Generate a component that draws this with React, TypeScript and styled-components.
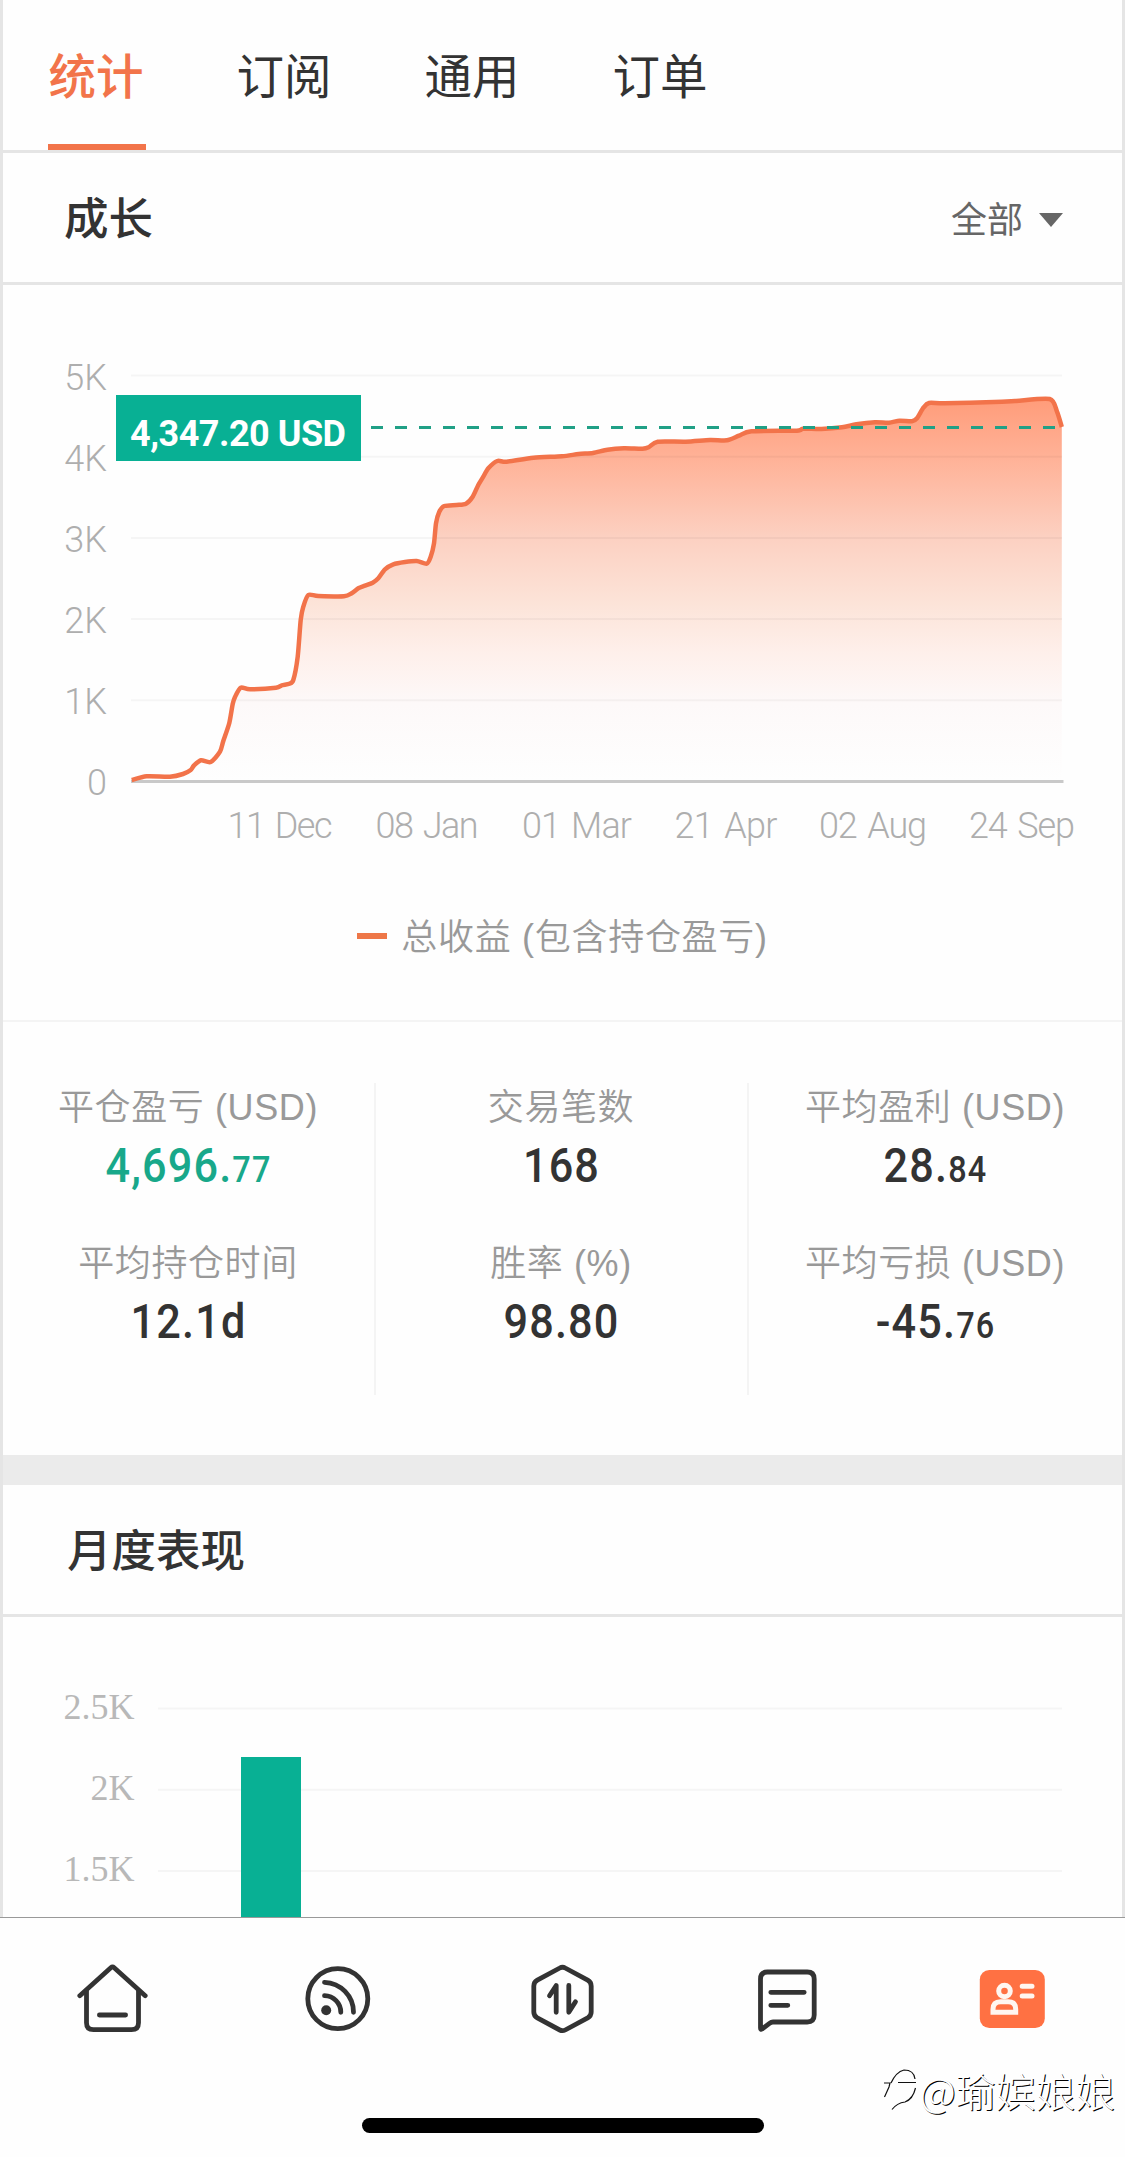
import { useState } from "react";
import styled, { createGlobalStyle } from "styled-components";

const GlobalStyle = createGlobalStyle`
  * {
    box-sizing: border-box;
  }

  body {
    margin: 0;
    background: #fff;
    color: #333;
    font-family: "Liberation Sans", "Noto Sans CJK SC", sans-serif;
  }
`;

const Page = styled.div`
  position: relative;
  display: flex;
  flex-direction: column;
  width: 1125px;
  height: 2157px;
  overflow: hidden;
  background: #fefefe;
`;

const Content = styled.main`
  flex: none;
  height: 1917px;
  overflow: hidden;
  border: solid #e5e5e5;
  border-width: 0 3px;
`;

const Tabs = styled.nav`
  display: flex;
  gap: 90px;
  height: 153px;
  padding-left: 45px;
  border-bottom: 3px solid #e5e5e5;
`;

const Tab = styled.div<{ $active: boolean }>`
  width: 98px;
  height: 150px;
  padding: 42px 2px 0 0;
  border-bottom: 6px solid ${(p) => (p.$active ? "#f2744a" : "transparent")};
  color: ${(p) => (p.$active ? "#f2744a" : "#333")};
  font-size: 47.5px;
  font-weight: ${(p) => (p.$active ? 500 : 400)};
  line-height: 72px;
  text-align: center;
  white-space: nowrap;
  cursor: pointer;
`;

const SectionHeader = styled.header<{ $indent: number }>`
  display: flex;
  align-items: center;
  justify-content: space-between;
  height: 132px;
  padding: 5px 59px 0 ${(p) => p.$indent}px;
  border-bottom: 3px solid #e5e5e5;
`;

const Title = styled.h2`
  margin: 0;
  font-size: 44.5px;
  font-weight: 500;
  line-height: 66px;
`;

const Filter = styled.div`
  display: flex;
  align-items: center;
  gap: 16px;
  padding-top: 2px;
  color: #666;
  font-size: 36px;
  line-height: 54px;
`;

const Caret = styled.span`
  margin-bottom: 2px;
  border: solid transparent;
  border-width: 14px 12px 0;
  border-top-color: #666;
`;

const Chart = styled.svg`
  display: block;
`;

const Legend = styled.div`
  display: flex;
  align-items: center;
  justify-content: center;
  gap: 14px;
  height: 54px;
  margin: 42px 0 59px;
  color: #999;
  font-size: 36px;
  letter-spacing: 0.7px;
  font-weight: 350;

  &::before {
    content: "";
    width: 30px;
    height: 6px;
    margin-top: 4px;
    background: #ee7748;
  }
`;

const Stats = styled.section`
  display: grid;
  grid-template-columns: repeat(3, 1fr);
  height: 435px;
  padding: 61px 0 62px;
  border-top: 2px solid #f4f4f4;
`;

const StatColumn = styled.div`
  display: flex;
  flex-direction: column;
  height: 312px;

  &:not(:last-child) {
    border-right: 2px solid #f4f4f4;
  }
`;

const Stat = styled.div`
  height: 156px;
  text-align: center;
`;

const StatLabel = styled.div`
  padding-right: 1px;
  color: #999;
  font-size: 36px;
  font-weight: 350;
  letter-spacing: 0.6px;
  line-height: 50px;
`;

const StatValue = styled.div<{ $profit?: boolean }>`
  color: ${(p) => (p.$profit ? "#18a88a" : "#333")};
  font-family: Roboto, sans-serif;
  font-size: 48px;
  font-weight: 500;
  letter-spacing: 1.3px;
  line-height: 66px;
  transform: scaleX(0.9);
`;

const Fraction = styled.span`
  font-size: 36px;
`;

const Gap = styled.div`
  height: 30px;
  margin: 0 -3px;
  background: #ebebeb;
`;

const TabBar = styled.footer`
  display: flex;
  justify-content: space-around;
  height: 192px;
  padding-top: 45px;
  border-top: 1px solid #999;
`;

const TabBarItem = styled.svg`
  width: 72px;
  height: 72px;
  fill: none;
  stroke: #333;
  stroke-width: 4.8;
  stroke-linecap: round;
  stroke-linejoin: round;
`;

const HomeIndicator = styled.div`
  width: 402px;
  height: 15px;
  margin: 9px auto 0;
  border-radius: 8px;
  background: #000;
`;

const Watermark = styled.div`
  position: absolute;
  right: 10px;
  bottom: 40px;
  display: flex;
  align-items: center;
  gap: 1px;
  color: #fff;
  font-family: "Noto Sans CJK SC", sans-serif;
  font-size: 39.8px;
  font-weight: 300;
  line-height: 54px;
  text-shadow: 1px 1px 0.5px #000;
`;

const tabs = ["统计", "订阅", "通用", "订单"];

const growth: [number, number][] = [
  [131.7, 780], [146.7, 776.3], [170, 776.7], [183, 774], [190.7, 770], [194, 765.5], [201, 760.3],
  [210.7, 762], [220, 751.7], [223.3, 741], [229.3, 723], [232.7, 704], [235, 697], [240.7, 687.7],
  [250, 689.3], [276, 687.7], [281.7, 685.3], [289.3, 683.7], [293.3, 680], [297.7, 656.7],
  [300.7, 620], [303.3, 606.7], [308.3, 595], [318.3, 596], [344, 596.3], [351.7, 593.3],
  [358.3, 588.3], [365, 585.7], [372.7, 582.7], [378.3, 578.3], [385, 569.3], [393.3, 564.3],
  [405, 562], [416.7, 561], [426.7, 563.7], [430.7, 556.7], [434, 543.3], [436, 523.3],
  [439.3, 511.7], [444.3, 506], [456.7, 505], [466, 503.7], [472.7, 496.7], [478.3, 485],
  [483.3, 476.7], [488.3, 468.3], [497.3, 461], [506.7, 461.7], [533.5, 457.7], [562, 456.3],
  [578.7, 454], [593, 453], [607.5, 449.7], [624, 448.3], [642.5, 448.7], [648.6, 447.3],
  [657.7, 441.7], [685.7, 441.7], [710, 440], [726.8, 440.3], [739, 435.7], [751.5, 431.3],
  [796.7, 430.7], [803, 428.7], [821.4, 429], [842, 427.3], [856.4, 424.3], [875, 422.3],
  [889, 422.7], [899.6, 420.7], [912, 421.3], [917, 418.3], [923.4, 407.7], [929, 403],
  [944.8, 403.3], [994, 402], [1015, 401], [1049.7, 399], [1057, 411.7], [1061.8, 427],
];

const growthTicks = ["5K", "4K", "3K", "2K", "1K", "0"];

const dates = [
  { x: 280, label: "11 Dec", width: 105 },
  { x: 427, label: "08 Jan", width: 103 },
  { x: 577, label: "01 Mar", width: 110 },
  { x: 726, label: "21 Apr", width: 103 },
  { x: 873, label: "02 Aug", width: 108 },
  { x: 1022, label: "24 Sep", width: 106 },
];

const stats = [
  [
    { label: "平仓盈亏 (USD)", value: "4,696.", fraction: "77", profit: true },
    { label: "平均持仓时间", value: "12.1d" },
  ],
  [
    { label: "交易笔数", value: "168" },
    { label: "胜率 (%)", value: "98.80" },
  ],
  [
    { label: "平均盈利 (USD)", value: "28.", fraction: "84" },
    { label: "平均亏损 (USD)", value: "-45.", fraction: "76" },
  ],
];

// tangents are kept short so that the steps don't overshoot
const toPath = (points: [number, number][]) =>
  points.reduce((path, [x, y], i) => {
    if (i === 0) return `M${x} ${y}`;
    const [px, py] = points[i - 1];
    const before = points[i - 2] ?? points[i - 1];
    const after = points[i + 1] ?? points[i];
    const c1 = [px + (x - before[0]) / 8, py + (y - before[1]) / 8];
    const c2 = [x - (after[0] - px) / 8, y - (after[1] - py) / 8];
    return `${path} C${c1.join(" ")} ${c2.join(" ")} ${x} ${y}`;
  }, "");

function GrowthChart() {
  const line = toPath(growth);

  return (
    <Chart width={1119} height={580} viewBox="3 285 1119 580" fontFamily="Roboto, sans-serif" fontSize={36} fontWeight={300}>
      <defs>
        <linearGradient id="growth" gradientUnits="userSpaceOnUse" x1="0" y1="399" x2="0" y2="781">
          <stop offset="0" stopColor="#ff9c7a" />
          <stop offset="0.15" stopColor="#ffb196" />
          <stop offset="0.36" stopColor="#fcd0c1" />
          <stop offset="0.54" stopColor="#fce4d9" />
          <stop offset="0.66" stopColor="#feefea" />
          <stop offset="0.8" stopColor="#fdf9f9" />
          <stop offset="1" stopColor="#fefefe" />
        </linearGradient>
      </defs>
      <path d={`${line} V781 H131.7 Z`} fill="url(#growth)" />
      {growthTicks.map((tick, i) => (
        <g key={tick}>
          {tick !== "0" && (
            <line x1={131} x2={1062} y1={375.5 + i * 81.2} y2={375.5 + i * 81.2} stroke="#000" strokeOpacity={0.035} strokeWidth={2} />
          )}
          <text x={107} y={390 + i * 81} fill="#aeaeae" textAnchor="end">{tick}</text>
        </g>
      ))}
      <line x1={131} x2={1063.5} y1={781.5} y2={781.5} stroke="#c9c9c9" strokeWidth={3} />
      <path d={line} fill="none" stroke="#f2734a" strokeWidth={4.5} strokeLinejoin="round" />
      <line x1={371} x2={1056} y1={427.5} y2={427.5} stroke="#20a086" strokeWidth={3} strokeDasharray="12 12" />
      <rect x={116} y={395} width={245} height={66} fill="#08b094" />
      <text x={130} y={446} fill="#fff" fontWeight={700} textLength={216}>4,347.20 USD</text>
      {dates.map(({ x, label, width }) => (
        <text key={label} x={x} y={837.5} fill="#aeaeae" textAnchor="middle" wordSpacing={3} textLength={width}>{label}</text>
      ))}
    </Chart>
  );
}

function MonthlyChart() {
  return (
    <Chart width={1119} height={300} viewBox="3 1617 1119 300" fontFamily="Liberation Serif, serif" fontSize={36}>
      {["2.5K", "2K", "1.5K"].map((tick, i) => (
        <g key={tick}>
          <line x1={158} x2={1062} y1={1708.5 + i * 81.2} y2={1708.5 + i * 81.2} stroke="#f5f5f5" strokeWidth={2} />
          <text x={134.5} y={1719 + i * 81} fill="#b8b8b8" textAnchor="end">{tick}</text>
        </g>
      ))}
      <rect x={241} y={1757} width={60} height={160} fill="#08b094" />
    </Chart>
  );
}

export default function App() {
  const [activeTab, setActiveTab] = useState(0);

  return (
    <>
      <GlobalStyle />
      <Page>
        <Content>
          <Tabs>
            {tabs.map((tab, index) => (
              <Tab key={tab} role="button" $active={activeTab === index} onClick={() => setActiveTab(index)}>{tab}</Tab>
            ))}
          </Tabs>

          <SectionHeader $indent={61}>
            <Title>成长</Title>
            <Filter>全部<Caret /></Filter>
          </SectionHeader>
          <GrowthChart />
          <Legend>总收益 (包含持仓盈亏)</Legend>

          <Stats>
            {stats.map((column, index) => (
              <StatColumn key={index}>
                {column.map((stat) => (
                  <Stat key={stat.label}>
                    <StatLabel>{stat.label}</StatLabel>
                    <StatValue $profit={stat.profit}>
                      {stat.value}
                      {stat.fraction && <Fraction>{stat.fraction}</Fraction>}
                    </StatValue>
                  </Stat>
                ))}
              </StatColumn>
            ))}
          </Stats>

          <Gap />
          <SectionHeader $indent={64}>
            <Title>月度表现</Title>
          </SectionHeader>
          <MonthlyChart />
        </Content>

        <TabBar>
          <TabBarItem viewBox="0 0 72 72">
            <path d="M2.8 32.7 L33.8 4.7 Q35.5 3.2 37.2 4.7 L68.2 32.7" />
            <path d="M9.5 28 V59.7 Q9.5 66.7 16.5 66.7 H54.5 Q61.5 66.7 61.5 59.7 V28" />
            <path d="M22.4 52 H48.6" />
          </TabBarItem>
          <TabBarItem viewBox="0 0 72 72">
            <circle cx="35.8" cy="35.7" r="30" />
            <path d="M22.5 19.3 A30 30 0 0 1 51.5 49.3 M22.5 32.7 A16.5 16.5 0 0 1 38.8 49.3" />
            <circle cx="24.2" cy="47.3" r="5" fill="#333" stroke="none" />
          </TabBarItem>
          <TabBarItem viewBox="0 0 72 72">
            <path d="M32.8 5 Q35.5 3.4 38.2 5 L60.7 17.2 Q64.2 19.2 64.2 23 V49 Q64.2 52.8 60.7 54.8 L38.2 67 Q35.5 68.4 32.8 67 L10.3 54.8 Q6.8 52.8 6.8 49 V23 Q6.8 19.2 10.3 17.2 Z" />
            <path d="M22.5 32.7 L29.2 22.5 V49.3 M41.8 22.5 V49.3 L48.5 38.7" />
          </TabBarItem>
          <TabBarItem viewBox="0 0 72 72">
            <path d="M8.5 16 Q8.5 9 15.5 9 H55.2 Q62.2 9 62.2 16 V52 Q62.2 59 55.2 59 H21 Q19.2 59 17.5 60.3 L10 66 Q8.5 66.8 8.5 65 Z" />
            <path d="M18.8 29.3 H52.2 M18.8 42.3 H35.8" />
          </TabBarItem>
          <TabBarItem viewBox="0 0 72 72">
            <rect x="2.8" y="7" width="65" height="58" rx="9.5" fill="#ff7143" stroke="none" />
            <g stroke="#fff6f0" strokeWidth="5">
              <circle cx="27.5" cy="28" r="5.8" />
              <path d="M16 49.2 V46.3 Q16 38.8 23.5 38.8 H31.2 Q38.7 38.8 38.7 46.3 V49.2 Z" strokeLinejoin="miter" />
              <path d="M45.2 23.3 H55 M45.2 33 H55" />
            </g>
          </TabBarItem>
        </TabBar>
        <HomeIndicator />

        <Watermark>
          <svg width="36" height="42" viewBox="0 0 36 42" fill="none" stroke="#111" strokeWidth="1.2">
            <path d="M8 14 Q13 3 21 1 Q31 1 32 10 M1 14 H7 L6 18 L1.5 28 M15 13.5 H33 M32.5 19 Q30 30 22 33 Q14 34 9 40.5" />
          </svg>
          @瑜嫔娘娘
        </Watermark>
      </Page>
    </>
  );
}
